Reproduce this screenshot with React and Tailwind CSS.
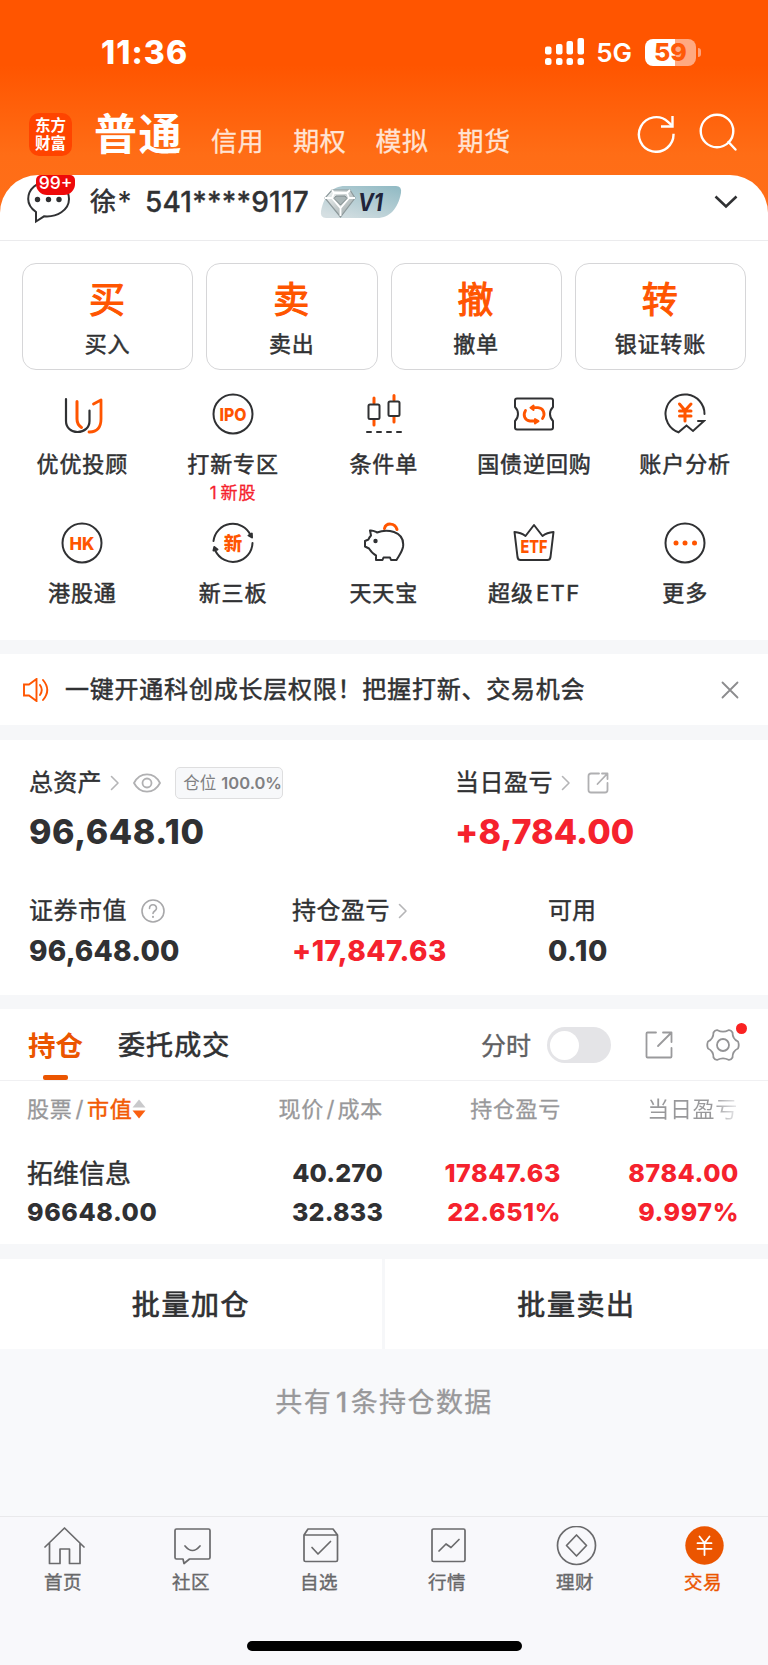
import React from "react";

const DARK = "#303133";
const ORANGE = "#ff5500";

function Svg({ w, h, vb, className = "", children, stroke = DARK, sw = 2, cap = "round" }) {
  return (
    <svg width={w} height={h} viewBox={vb || `0 0 ${w} ${h}`} className={`block shrink-0 ${className}`} fill="none" stroke={stroke} strokeWidth={sw} strokeLinecap={cap} strokeLinejoin="round">
      {children}
    </svg>
  );
}

function IconText({ x = 21, y, size, children, width }) {
  return (
    <text x={x} y={y} textAnchor="middle" fontSize={size} fontWeight="800" fill={ORANGE} stroke="none" textLength={width} lengthAdjust="spacingAndGlyphs" fontFamily="Inter, 'Noto Sans CJK SC', sans-serif">
      {children}
    </text>
  );
}

function StatusBar() {
  return (
    <div className="flex h-[104px] items-start pt-[38px] pl-[101px] pr-[67px]">
      <div className="mt-px flex h-7 items-center text-[32px] font-extrabold leading-7 tracking-[1.100px] text-white">11:36</div>
      <div className="ml-auto flex h-7 items-center">
        <Svg w={40} h={28} stroke="none">
          <g fill="#fff">
            <rect x="0" y="8.5" width="6.500" height="8" rx="2" />
            <rect x="11" y="6" width="6.500" height="10.500" rx="2" />
            <rect x="21.500" y="3" width="6.500" height="13.500" rx="2" />
            <rect x="32.500" y="0" width="6.500" height="16.500" rx="2" />
            <rect x="0" y="20" width="6.500" height="7" rx="2.500" />
            <rect x="11" y="20" width="6.500" height="7" rx="2.500" />
            <rect x="21.500" y="20" width="6.500" height="7" rx="2.500" />
            <rect x="32.500" y="20" width="6.500" height="7" rx="2.500" />
          </g>
        </Svg>
        <span className="ml-[11px] mt-[2px] text-[26px] font-semibold leading-7 text-white">5G</span>
        <div className="ml-[13px] flex h-[27px] w-[51px] items-center justify-center rounded-[8px] bg-[linear-gradient(90deg,#fff_59%,#ffa981_59%)] text-[25px] font-extrabold leading-[27px] text-[#ff5a08]">59</div>
        <div className="ml-[2px] h-[9px] w-[3px] rounded-r-full bg-[#ffa27a]" />
      </div>
    </div>
  );
}

function Header() {
  return (
    <div className="flex h-[71px] items-start pl-[29px] pr-[29px]">
      <div className="mt-[9px] flex h-[43px] w-[43px] flex-col items-center justify-center rounded-[10px] bg-[#ff4400] text-[15.500px] font-bold leading-[18px] text-white">
        <span>东方</span>
        <span>财富</span>
      </div>
      <div className="ml-[22px] mt-[5px] text-[43px] font-bold leading-[50px] tracking-[1.5px] text-white">普通</div>
      <div className="ml-[28px] mt-[20px] flex gap-[29px] text-[26px] leading-[36px] tracking-[0.6px] text-[#ffe3d4] [-webkit-text-stroke:0.3px]">
        <span>信用</span>
        <span>期权</span>
        <span>模拟</span>
        <span>期货</span>
      </div>
      <Svg w={40} h={40} className="ml-auto mt-[9px]" stroke="#fff" sw={2.4} cap="butt">
        <path d="M37.500 20.800 A17.300 17.300 0 1 1 32 8.800 L36 12.500" strokeLinejoin="miter" />
        <path d="M36.500 3 V13.500 H25" strokeLinejoin="miter" />
      </Svg>
      <Svg w={40} h={40} className="ml-[23px] mt-[9px]" stroke="#fff" sw={2.4}>
        <circle cx="18" cy="18" r="16.300" />
        <path d="M29.500 29 L36.500 36.500" />
      </Svg>
    </div>
  );
}

function Account() {
  return (
    <div className="flex h-[66px] items-start rounded-t-[38px] border-b border-[#ebebed] bg-white pl-[26px] pr-[30px]">
      <div className="relative h-[50px] w-[50px] shrink-0">
        <Svg w={50} h={50}>
          <path d="M10 46.500 V37 C5 33.500 2.200 29 2.200 24 C2.200 14 11 6.500 22.500 6.500 C34 6.500 43 14 43 24 C43 35 31 42.500 18 41.300 Z" strokeLinejoin="miter" />
          <g fill={DARK} stroke="none">
            <circle cx="11.500" cy="24.500" r="2.700" />
            <circle cx="22.500" cy="24.500" r="2.700" />
            <circle cx="33" cy="24.500" r="2.700" />
          </g>
        </Svg>
        <div className="absolute left-[10px] top-0 h-[20px] w-[39px] rounded-b-[11px] rounded-t-[5px] bg-[#ee0a0a] text-center text-[17.500px] font-medium leading-[15px] text-white">99+</div>
      </div>
      <div className="ml-[14px] flex items-start text-[28px] font-medium leading-[54px] tracking-[0.2px] text-[#303133]">
        <span className="text-[26px] font-normal [-webkit-text-stroke:0.6px]">徐</span>
        <span className="ml-[1px]">*</span>
        <span className="ml-[13px] [-webkit-text-stroke:0.3px]">541****9117</span>
      </div>
      <svg width="82" height="34" viewBox="0 0 82 34" className="ml-[11px] mt-[10px] block">
        <defs>
          <linearGradient id="vip" x1="1" y1="0" x2="0.200" y2="1">
            <stop offset="0" stopColor="#8fb9c3" />
            <stop offset="1" stopColor="#d5dfe2" />
          </linearGradient>
          <linearGradient id="gem" x1="0" y1="0" x2="1" y2="1">
            <stop offset="0" stopColor="#f5f8f8" />
            <stop offset="1" stopColor="#98a3a4" />
          </linearGradient>
        </defs>
        <path d="M25 1 H76 Q82 1 81 8 C78 23 70 33 57 33 H6 Q0 33 1 26 C4 11 12 1 25 1 Z" fill="url(#vip)" />
        <path d="M12 5 H30 L35 13 L20.500 32 L5 13 Z" fill="url(#gem)" stroke="#8d999b" strokeWidth="1.200" />
        <path d="M5 13 H12 L20.500 23 L29 13 H35 M12 13 L14 8 H27 L29 13 M12 5 L14 8 M30 5 L27 8 M20.500 23 V31" fill="none" stroke="#fff" strokeWidth="1.800" />
        <path d="M14 13.500 L20.500 20 L27 13.500 L25 11 H16 Z" fill="#aab5b6" stroke="#727e80" strokeWidth="0.800" />
        <text x="38" y="25.500" fontSize="24" fontWeight="700" fontStyle="italic" fill="#20243a" textLength="25" lengthAdjust="spacingAndGlyphs" fontFamily="Inter, sans-serif">V1</text>
      </svg>
      <Svg w={24} h={14} className="ml-auto mt-[20px]" sw={2.600} cap="butt">
        <path d="M1.500 1.500 L12 11.500 L22.500 1.500" strokeLinejoin="miter" />
      </Svg>
    </div>
  );
}

function QuickActions() {
  const items = [["买", "买入"], ["卖", "卖出"], ["撤", "撤单"], ["转", "银证转账"]];
  return (
    <div className="grid grid-cols-4 gap-[13px] px-[22px] pt-[22px]">
      {items.map(([a, b]) => (
        <div key={b} className="flex h-[107px] flex-col items-center rounded-[14px] border border-[#d6d6d8] pt-[15px]">
          <div className="mr-px text-[36px] leading-[42px] text-[#ff5500] [-webkit-text-stroke:1.1px]">{a}</div>
          <div className="mt-[5px] text-[22px] leading-[36px] tracking-[0.800px] text-[#303133] [-webkit-text-stroke:0.5px]">{b}</div>
        </div>
      ))}
    </div>
  );
}

const gridItems = [
  {
    label: "优优投顾",
    icon: (
      <Svg w={42} h={42} sw={2.200}>
        <path d="M5 6 V28 C5 34.500 10 39 16.500 39 C23.500 39 28.500 34.500 28.500 28 V17.500" />
        <path d="M16 8.500 V26 C16 30 17.500 32.500 20.500 34.500" stroke={ORANGE} strokeWidth="3" />
        <path d="M32.500 11 L40 7 V26 C40 34.500 36 39.300 28 39" stroke={ORANGE} strokeWidth="2.800" />
      </Svg>
    ),
  },
  {
    label: "打新专区",
    note: (<><span className="mr-[3px]">1</span>新股</>),
    icon: (
      <Svg w={42} h={42}>
        <circle cx="21" cy="21" r="19.500" />
        <IconText y={27.500} size={18} width={27}>IPO</IconText>
      </Svg>
    ),
  },
  {
    label: "条件单",
    icon: (
      <Svg w={42} h={42}>
        <path d="M11 5 V10 M11 27 V32 M31 2.500 V7 M31 24 V29" stroke={ORANGE} strokeWidth="3" />
        <rect x="5.500" y="11.500" width="11" height="14.500" rx="1.500" />
        <rect x="25.500" y="8.500" width="11" height="14.500" rx="1.500" />
        <path d="M4 39 H8 M14 39 H18 M24 39 H28 M34 39 H38" />
      </Svg>
    ),
  },
  {
    label: "国债逆回购",
    icon: (
      <Svg w={42} h={42}>
        <path d="M4 5.500 H38 Q40 5.500 40 7.500 V14 C36 18 36 24 40 28 V34.500 Q40 36.500 38 36.500 H4 Q2 36.500 2 34.500 V28 C6 24 6 18 2 14 V7.500 Q2 5.500 4 5.500 Z" />
        <g stroke={ORANGE} strokeWidth="2.800">
          <path d="M12.500 17.500 C9.500 22.500 12 27.500 17 28 H23" />
          <path d="M29.500 25.500 C33 20.500 30 15 25 14.700 H20" />
          <path d="M20.500 12.500 V17 L17.500 14.700 Z M22 26 V30.500 L25.500 28.200 Z" fill={ORANGE} strokeWidth="2" />
        </g>
      </Svg>
    ),
  },
  {
    label: "账户分析",
    icon: (
      <Svg w={42} h={42}>
        <path d="M40.500 21 A19.500 19.500 0 1 0 14.500 39.300 L22.500 32.500 L29 38 L40 28 H34" strokeLinejoin="miter" />
        <path d="M15.500 11 L21 17.500 L27 11 M21 17.500 V28 M15.500 18 H27 M15.500 23 H27" stroke={ORANGE} strokeWidth="3" />
      </Svg>
    ),
  },
  {
    label: "港股通",
    icon: (
      <Svg w={42} h={42}>
        <circle cx="21" cy="21" r="19.500" />
        <IconText y={27.500} size={18} width={25}>HK</IconText>
      </Svg>
    ),
  },
  {
    label: "新三板",
    icon: (
      <Svg w={42} h={42}>
        <path d="M1.500 19 A19.500 19.500 0 0 1 38.500 13 M40.500 21 A19.500 19.500 0 0 1 3.500 29" />
        <path d="M36.500 13.500 L39.800 11.500 L40 15.500 Z M1.500 28.500 L2.300 25 L5.500 27.500 Z" fill={DARK} />
        <IconText y={27.800} size={18.500}>新</IconText>
      </Svg>
    ),
  },
  {
    label: "天天宝",
    icon: (
      <Svg w={42} h={42}>
        <path d="M21.500 6.500 C23 0.500 32 0.500 34 7.500" stroke={ORANGE} strokeWidth="3" />
        <path d="M7 8.500 C10 8 12 9.500 14 10.500 C19 8.500 25 8 31 10 C38 12.500 41 18 40 25 C39 30 36 33.500 33.500 38 H28 L27 35.500 H20.500 L19.500 38 H13 V33.500 C9.500 32 8 29.500 6 26.500 L2 24.500 V19 L5.500 17.500 C6 16 7 14.500 8 13.500 Z" />
        <circle cx="12.500" cy="19" r="2.200" fill={DARK} stroke="none" />
      </Svg>
    ),
  },
  {
    label: (<>超级<span className="ml-[2px] tracking-[1.500px]">ETF</span></>),
    icon: (
      <Svg w={42} h={42}>
        <path d="M1.500 10 Q8 10.500 12.500 14 L21 3 L29.500 14 Q34 10.500 40.500 10 L37.500 35 Q37 38 34.500 38 H7.500 Q5 38 4.500 35 Z" />
        <IconText y={31} size={18} width={27}>ETF</IconText>
      </Svg>
    ),
  },
  {
    label: "更多",
    icon: (
      <Svg w={42} h={42}>
        <circle cx="21" cy="21" r="19.500" />
        <g fill={ORANGE} stroke="none">
          <circle cx="12" cy="21" r="2.500" />
          <circle cx="21" cy="21" r="2.500" />
          <circle cx="30.500" cy="21" r="2.500" />
        </g>
      </Svg>
    ),
  },
];

function FeatureGrid() {
  return (
    <div className="grid h-[270px] grid-cols-5 grid-rows-[129px_auto] pl-[7px] pr-[7.500px] pt-[23px]">
      {gridItems.map((it, i) => (
        <div key={i} className="flex flex-col items-center">
          {it.icon}
          <div className="mt-[10.500px] whitespace-nowrap text-[22px] leading-[36px] tracking-[0.900px] text-[#303133] [-webkit-text-stroke:0.500px]">{it.label}</div>
          {it.note && <div className="text-[17px] leading-[22px] tracking-[0.900px] text-[#f5222d] [-webkit-text-stroke:0.300px]">{it.note}</div>}
        </div>
      ))}
    </div>
  );
}

function Notice() {
  return (
    <div className="flex h-[71px] items-center bg-white pl-[23px] pr-[29px]">
      <Svg w={27} h={24} stroke={ORANGE} sw={1.900}>
        <path d="M1 6.500 H6 L13.500 1 V23 L6 17.500 H1 Z" strokeLinejoin="miter" />
        <path d="M17 7 Q20.500 12 17 17 M20 2 Q28.500 12 20 22" />
      </Svg>
      <div className="ml-[15px] mt-px text-[24px] leading-[36px] tracking-[0.780px] text-[#303133] [-webkit-text-stroke:0.500px]">一键开通科创成长层权限！把握打新、交易机会</div>
      <Svg w={18} h={18} className="ml-auto" stroke="#8c8c8e" sw={1.800}>
        <path d="M1.500 1.500 L16.500 16.500 M16.500 1.500 L1.500 16.500" />
      </Svg>
    </div>
  );
}

function Chevron() {
  return (
    <Svg w={10} h={16} className="ml-[8px]" stroke="#b5b5b7" sw={1.600}>
      <path d="M1.500 1.500 L8 8 L1.500 14.500" />
    </Svg>
  );
}

function Assets() {
  return (
    <div className="h-[255px] bg-white px-[29px] pt-[25px] text-[#303133]">
      <div className="grid grid-cols-[426px_1fr]">
        <div>
          <div className="flex h-9 items-center text-[24px] leading-9 tracking-[0.300px] [-webkit-text-stroke:0.400px]">
            总资产
            <Chevron />
            <Svg w={28} h={20} className="ml-[13px]" stroke="#b0b0b2" sw={1.800}>
              <path d="M1 10 C7 -1.500 21 -1.500 27 10 C21 21.500 7 21.500 1 10 Z" />
              <circle cx="14" cy="10" r="4.500" />
            </Svg>
            <div className="ml-[14px] flex h-8 w-[108px] items-center justify-end whitespace-nowrap rounded-[5px] border border-[#dededf] bg-[#f7f8fa] text-[16.500px] leading-8 tracking-normal text-[#808082] [-webkit-text-stroke:0]">
              <span>仓位</span>
              <span className="ml-[5px] font-semibold">100.0%</span>
            </div>
          </div>
          <div className="mt-[11px] text-[34px] font-extrabold leading-10 tracking-[0.600px]">96,648.10</div>
        </div>
        <div>
          <div className="flex h-9 items-center text-[24px] leading-9 tracking-[0.500px] [-webkit-text-stroke:0.400px]">
            当日盈亏
            <Chevron />
            <Svg w={22} h={22} className="ml-[16px]" stroke="#b0b0b2" sw={1.800}>
              <path d="M12 1.500 H4 Q1.500 1.500 1.500 4 V18 Q1.500 20.500 4 20.500 H18 Q20.500 20.500 20.500 18 V11 M15 1.500 H20.500 V7 M20 2 L10.500 12" />
            </Svg>
          </div>
          <div className="mt-[11px] text-[34px] font-extrabold leading-10 tracking-[0.100px] text-[#f5222d]">+8,784.00</div>
        </div>
      </div>
      <div className="mt-[41px] grid grid-cols-[263px_256px_1fr]">
        <div>
          <div className="flex h-9 items-center text-[24px] leading-9 tracking-[0.500px] [-webkit-text-stroke:0.400px]">
            证券市值
            <Svg w={24} h={24} className="ml-[14px]" stroke="#a8a8aa" sw={1.600}>
              <circle cx="12" cy="12" r="11" />
              <path d="M8.500 9.500 C8.500 4.500 15.500 4.500 15.500 9.300 C15.500 12 12 12 12 14.500" />
              <path d="M12 17.800 V18" strokeWidth="2" />
            </Svg>
          </div>
          <div className="mt-[6px] text-[28px] font-extrabold leading-[32px] tracking-[0.200px]">96,648.00</div>
        </div>
        <div>
          <div className="flex h-9 items-center text-[24px] leading-9 tracking-[0.500px] [-webkit-text-stroke:0.400px]">
            持仓盈亏
            <Chevron />
          </div>
          <div className="mt-[6px] text-[28px] font-extrabold leading-[32px] tracking-[0.450px] text-[#f5222d]">+17,847.63</div>
        </div>
        <div>
          <div className="flex h-9 items-center text-[24px] leading-9 [-webkit-text-stroke:0.400px]">可用</div>
          <div className="mt-[6px] text-[28px] font-extrabold leading-[32px] tracking-[0.600px]">0.10</div>
        </div>
      </div>
    </div>
  );
}

function Holdings() {
  return (
    <div className="bg-white">
      <div className="flex h-[72px] items-start border-b border-[#f0f0f2] pl-[28px] pr-[28px]">
        <div className="flex flex-col items-center">
          <div className="mt-[17px] text-[27.500px] font-bold leading-[40px] text-[#eb5500]">持仓</div>
          <div className="mt-[9px] h-[5px] w-[25px] rounded-[2px] bg-[#eb5500]" />
        </div>
        <div className="ml-[35px] mt-[17px] text-[27px] leading-[40px] tracking-[1.100px] text-[#303133] [-webkit-text-stroke:0.600px]">委托成交</div>
        <div className="ml-auto mt-[18px] text-[25px] leading-[38px] text-[#606062] [-webkit-text-stroke:0.400px]">分时</div>
        <div className="ml-[16px] mt-[18px] flex h-[36px] w-[64px] items-center rounded-full bg-[#e4e4e7] px-[3px]">
          <div className="h-[29px] w-[29px] rounded-full bg-white" />
        </div>
        <Svg w={28} h={28} className="ml-[34px] mt-[22px]" stroke="#9a9a9c" sw={1.800}>
          <path d="M11 1.500 H2.500 Q1.500 1.500 1.500 2.500 V25.500 Q1.500 26.500 2.500 26.500 H25.500 Q26.500 26.500 26.500 25.500 V17 M18 1.500 H26.500 V11 M26 2 L13 15" />
        </Svg>
        <div className="relative ml-[33px] mt-[19px]">
          <Svg w={34} h={34} stroke="#939395" sw={1.800}>
            <path d="M11.500 2.200 Q17 5 22.500 2.200 Q25 1.800 26.500 4.500 Q26.500 11 32 13.500 Q33.500 17 32 20.500 Q26.500 23 26.500 29.500 Q25 32.200 22.500 31.800 Q17 29 11.500 31.800 Q9 32.200 7.500 29.500 Q7.500 23 2 20.500 Q0.500 17 2 13.500 Q7.500 11 7.500 4.500 Q9 1.800 11.500 2.200 Z" />
            <circle cx="17" cy="17" r="6" />
          </Svg>
          <div className="absolute -top-[5px] left-[30px] h-[11px] w-[11px] rounded-full bg-[#fa2222]" />
        </div>
      </div>
      <div className="h-[163px] pl-[27px] pr-[30px]">
        <div className="grid h-[56px] grid-cols-[200px_156px_178px_177px] items-center text-right text-[22px] leading-9 tracking-[0.700px] text-[#98989a] [-webkit-text-stroke:0.300px]">
          <div className="flex items-center">
            股票<span className="mx-[3px]">/</span><span className="text-[#f25a05] [-webkit-text-stroke:0.500px]">市值</span>
            <Svg w={14} h={20} stroke="none">
              <path d="M7 0.500 L13.500 8.500 H0.500 Z" fill="#c9c9cb" />
              <path d="M7 19.500 L13.500 11.500 H0.500 Z" fill="#fa5f10" />
            </Svg>
          </div>
          <div>现价<span className="mx-[2.500px]">/</span>成本</div>
          <div>持仓盈亏</div>
          <div><span className="bg-[linear-gradient(90deg,#98989a_72%,#ececee)] bg-clip-text text-transparent [-webkit-text-stroke:0]">当日盈亏</span></div>
        </div>
        <div className="mt-[17px] grid grid-cols-[200px_156px_178px_178px] text-right text-[25px] font-extrabold leading-[39px] tracking-[0.600px] text-[#f5222d]">
          <div className="text-left text-[26px] font-normal tracking-normal text-[#303133] [-webkit-text-stroke:0.500px]">拓维信息</div>
          <div className="tracking-[0.100px] text-[#303133]">40.270</div>
          <div>17847.63</div>
          <div>8784.00</div>
          <div className="text-left text-[#303133]">96648.00</div>
          <div className="tracking-[0.200px] text-[#303133]">32.833</div>
          <div>22.651%</div>
          <div>9.997%</div>
        </div>
      </div>
    </div>
  );
}

const tabs = [
  {
    label: "首页",
    icon: <path d="M1 20 L20.500 1 L40 20 M5.500 16 V36.500 H16 V22 H25.500 V36.500 H36 V16" />,
  },
  {
    label: "社区",
    icon: (
      <>
        <path d="M4.500 2 H36.500 Q38 2 38 3.500 V30.500 Q38 32 36.500 32 H17.500 L12 36.500 L11 32 H4.500 Q3 32 3 30.500 V3.500 Q3 2 4.500 2 Z" />
        <path d="M13 19 Q20.500 28 28 19" />
      </>
    ),
  },
  {
    label: "自选",
    icon: (
      <>
        <path d="M8 2 H33 L37.500 8 V33 Q37.500 34.500 36 34.500 H5.500 Q4 34.500 4 33 V8 Z M4.500 8 H37" />
        <path d="M12 20.500 L18 27 L30.500 14.500" />
      </>
    ),
  },
  {
    label: "行情",
    icon: (
      <>
        <rect x="4" y="2" width="33" height="32.500" rx="1.500" />
        <path d="M11 24 L18 17 L23 20.500 L31 12.500" />
      </>
    ),
  },
  {
    label: "理财",
    icon: (
      <>
        <circle cx="20.500" cy="18.500" r="19" />
        <path d="M20.500 8 L30.500 18.500 L20.500 29 L10.500 18.500 Z" />
      </>
    ),
  },
  {
    label: "交易",
    active: true,
    icon: (
      <>
        <circle cx="20.500" cy="18.500" r="19.200" fill="#eb5500" stroke="none" />
        <path d="M15.500 9.500 L20.500 16 L25.500 9.500 M20.500 16 V28 M13.500 16.200 H27.500 M13.500 21.800 H27.500" stroke="#fff" strokeWidth="1.800" />
      </>
    ),
  },
];

function TabBar() {
  return (
    <div className="flex h-[149px] flex-col items-center border-t border-[#e9e9eb] bg-[#f8f8fb]">
      <div className="grid w-full grid-cols-6">
        {tabs.map((t) => (
          <div key={t.label} className="flex flex-col items-center pt-[9px]">
            <svg width="41" height="40" viewBox="0 -1 41 40" className="block" fill="none" stroke="#6a6a6c" strokeWidth="1.700" strokeLinecap="round" strokeLinejoin="round">
              {t.icon}
            </svg>
            <div className={t.active ? "mr-[2px] mt-[2px] text-[18.500px] leading-7 tracking-[0.500px] text-[#eb5500] [-webkit-text-stroke:0.400px]" : "mr-[2px] mt-[2px] text-[18.500px] leading-7 tracking-[0.500px] text-[#68686a] [-webkit-text-stroke:0.400px]"}>{t.label}</div>
          </div>
        ))}
      </div>
      <div className="mt-[45px] h-[10px] w-[275px] rounded-full bg-black" />
    </div>
  );
}

export default function App() {
  return (
    <div className="flex h-[1665px] w-[768px] flex-col overflow-hidden bg-[#f6f7f9] font-['Inter','Noto_Sans_CJK_SC',sans-serif]">
      <div className="bg-[linear-gradient(180deg,#ff5500_65px,#ff6d16_155px,#ff6f1a_241px)]">
        <StatusBar />
        <Header />
        <Account />
      </div>
      <div className="h-[399px] bg-white">
        <QuickActions />
        <FeatureGrid />
      </div>
      <div className="h-[14px]" />
      <Notice />
      <div className="h-[15px]" />
      <Assets />
      <div className="h-[14px]" />
      <Holdings />
      <div className="mt-[15px] grid h-[90px] grid-cols-[382px_1fr] gap-[3px] text-[28px] leading-[92px] tracking-[1.600px] text-[#303133] [-webkit-text-stroke:0.700px]">
        <div className="bg-white text-center">批量加仓</div>
        <div className="bg-white text-center">批量卖出</div>
      </div>
      <div className="flex-1 bg-[#f8f9fb] pt-[34px] text-center text-[27px] leading-[40px] tracking-[1.400px] text-[#98989a] [-webkit-text-stroke:0.300px]">共有<span className="ml-[4px] mr-[2px] font-medium">1</span>条持仓数据</div>
      <TabBar />
    </div>
  );
}
